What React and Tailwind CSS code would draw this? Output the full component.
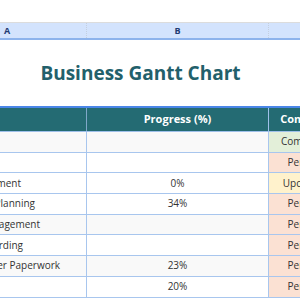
import React from 'react';

const rows = [
    { task: '', pad: 'pr-[65px]', progress: '', status: 'Completed', tone: 'bg-[#e3efd9]', shade: true },
    { task: '', pad: 'pr-[65px]', progress: '', status: 'Pending', tone: 'bg-[#fbe1d3]', shade: false },
    { task: 'Budget Assessment', pad: 'pr-[65px]', progress: '0%', status: 'Upcoming', tone: 'bg-[#fff2cc]', shade: false },
    { task: 'Resource Planning', pad: 'pr-[51px]', progress: '34%', status: 'Pending', tone: 'bg-[#fbe1d3]', shade: false },
    { task: 'Risk Management', pad: 'pr-[46px]', progress: '', status: 'Pending', tone: 'bg-[#fbe1d3]', shade: true },
    { task: 'Client Onboarding', pad: 'pr-[63px]', progress: '', status: 'Pending', tone: 'bg-[#fbe1d3]', shade: false },
    { task: 'Customer Paperwork', pad: 'pr-[26px]', progress: '23%', status: 'Pending', tone: 'bg-[#fbe1d3]', shade: true },
    { task: '', pad: 'pr-[65px]', progress: '20%', status: 'Pending', tone: 'bg-[#fbe1d3]', shade: false },
];

export default function App() {
    return (
        <div className="w-[300px] h-[300px] overflow-hidden bg-white font-['Open_Sans',sans-serif]">
            {/* Toolbar gap */}
            <div className="h-[22px] bg-white" />

            {/* Column letters */}
            <div className="flex h-[18px] bg-[#d3e3fd] border-t border-[#dcdcdc] border-b-2 border-b-[#8db3ec] text-[9px] font-bold text-[#1f3b73]">
                <div className="w-[87px] shrink-0 pl-[4px] flex items-center border-r border-dotted border-[#c4cfdf]">A</div>
                <div className="w-[182px] shrink-0 flex items-center justify-center border-r border-dotted border-[#c4cfdf]">B</div>
                <div className="flex-1" />
            </div>

            {/* Title */}
            <div className="h-[68px] flex border-b-2 border-[#4a86e8]">
                <div className="w-[281px] flex items-center justify-center pt-[1px]">
                    <h1 className="text-[19px] font-bold text-[#22606b]">Business Gantt Chart</h1>
                </div>
            </div>

            {/* Table header */}
            <div className="flex h-[24px] bg-[#246b73] border-b border-[#9fc0ea] text-white text-[11px] font-bold">
                <div className="w-[87px] shrink-0 border-r border-[#7fa8c9]" />
                <div className="w-[182px] shrink-0 flex items-center justify-center border-r border-[#9fc0ea]">Progress (%)</div>
                <div className="w-[75px] shrink-0 flex items-center justify-center">Complete</div>
            </div>

            {/* Rows */}
            {rows.map((r, i) => (
                <div
                    key={i}
                    className={`flex h-[20.7px] border-b border-[#a8c6ee] text-[10px] text-[#333333] ${r.shade ? 'bg-[#f9f9f9]' : 'bg-white'}`}
                >
                    <div className={`w-[87px] shrink-0 overflow-hidden flex items-center justify-end whitespace-nowrap border-r border-[#a8c6ee] ${r.pad}`}>
                        <span className="shrink-0">{r.task}</span>
                    </div>
                    <div className="w-[182px] shrink-0 flex items-center justify-center border-r border-[#a8c6ee]">{r.progress}</div>
                    <div className={`w-[75px] shrink-0 flex items-center justify-center whitespace-nowrap ${r.tone}`}>{r.status}</div>
                </div>
            ))}
        </div>
    );
}
